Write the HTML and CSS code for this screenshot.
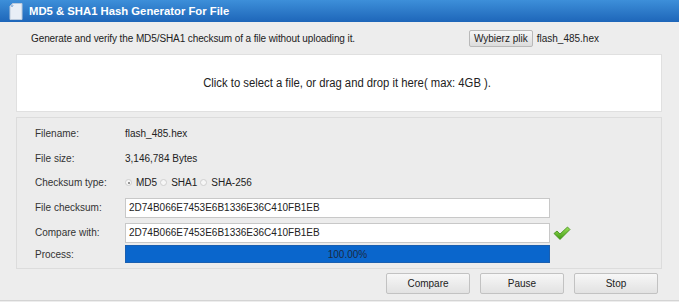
FILE: index.html
```html
<!DOCTYPE html>
<html>
<head>
<meta charset="utf-8">
<link rel="stylesheet" href="styles.css">
</head>
<body>
<div class="titlebar">
  <svg class="ticon" width="14" height="17" viewBox="0 0 14 17">
    <path d="M3.5 0.5 H13 V16.5 H1 V3 Z" fill="#e8eef6" stroke="#b9c9dc" stroke-width="1"/>
    <path d="M1 3 L3.5 0.5 V3 Z" fill="#9fb8d6"/>
    <path d="M2.5 4 L4 2.5" stroke="#4a86c8" stroke-width="1"/>
  </svg>
  <span class="title">MD5 &amp; SHA1 Hash Generator For File</span>
</div>
<div class="main">
  <div class="toprow">
    <span class="desc">Generate and verify the MD5/SHA1 checksum of a file without uploading it.</span>
    <span class="filepick"><span class="fbtn">Wybierz plik</span><span class="fname">flash_485.hex</span></span>
  </div>
  <div class="drop"><span class="droptext">Click to select a file, or drag and drop it here( max: 4GB ).</span></div>
  <div class="panel">
    <div class="row"><span class="lbl">Filename:</span><span class="val">flash_485.hex</span></div>
    <div class="row"><span class="lbl">File size:</span><span class="val">3,146,784 Bytes</span></div>
    <div class="row"><span class="lbl">Checksum type:</span>
      <span class="val radios">
        <span class="radio on"></span><span class="rlbl">MD5</span>
        <span class="radio"></span><span class="rlbl">SHA1</span>
        <span class="radio"></span><span class="rlbl">SHA-256</span>
      </span>
    </div>
    <div class="row"><span class="lbl">File checksum:</span><span class="inp">2D74B066E7453E6B1336E36C410FB1EB</span></div>
    <div class="row"><span class="lbl">Compare with:</span><span class="inp">2D74B066E7453E6B1336E36C410FB1EB</span>
      <svg class="check" width="18" height="15" viewBox="0 0 18 15">
        <defs><linearGradient id="g" x1="0" y1="0" x2="0" y2="1"><stop offset="0" stop-color="#9be05a"/><stop offset="1" stop-color="#3f9a12"/></linearGradient></defs>
        <path d="M1 7.5 L4 5 L7 8 L14.5 1 L17 3.5 L7 13.5 Z" fill="url(#g)" stroke="#3c8a14" stroke-width="0.8" stroke-linejoin="round"/>
      </svg>
    </div>
    <div class="row prow"><span class="lbl">Process:</span><span class="bar">100.00%</span></div>
  </div>
  <div class="buttons">
    <span class="btn">Compare</span>
    <span class="btn">Pause</span>
    <span class="btn">Stop</span>
  </div>
</div>
</body>
</html>
```

FILE: styles.css
```css
html, body {
  margin: 0;
  padding: 0;
}
body {
  width: 679px;
  height: 302px;
  background: #ededed;
  font-family: "Liberation Sans", Arial, sans-serif;
  font-size: 10px;
  color: #333;
  overflow: hidden;
}
.titlebar {
  height: 22px;
  background: linear-gradient(#3d8fd9, #1e66b9);
  display: flex;
  align-items: center;
  padding-left: 9px;
  box-sizing: border-box;
}
.ticon {
  margin-right: 6px;
}
.title {
  color: #fff;
  font-weight: bold;
  font-size: 11.3px;
}
.main {
  padding: 0 17px 0 16px;
  height: 279px;
  border-bottom: 1px solid #d4d4d4;
  box-sizing: border-box;
}
.toprow {
  display: flex;
  justify-content: space-between;
  align-items: center;
  height: 32px;
  padding-left: 15px;
  padding-top: 1px;
  box-sizing: border-box;
}
.desc {
  color: #222;
  letter-spacing: -0.1px;
}
.filepick {
  display: flex;
  align-items: center;
  margin-right: 63px;
}
.fbtn {
  border: 1px solid #b9b9b9;
  border-radius: 2px;
  background: linear-gradient(#f6f6f6, #dcdcdc);
  padding: 2px 4px;
  color: #222;
  margin-right: 4px;
}
.fname {
  color: #222;
}
.drop {
  height: 58px;
  background: #fff;
  border: 1px solid #e0e0e0;
  display: flex;
  align-items: center;
  justify-content: center;
  box-sizing: border-box;
  padding-left: 16px;
}
.droptext {
  font-size: 12px;
  color: #222;
  transform: scaleX(0.94);
  white-space: nowrap;
}
.panel {
  margin-top: 5px;
  height: 152px;
  border: 1px solid #dcdcdc;
  background: #ececec;
  box-sizing: border-box;
  padding: 3px 0 0 18px;
}
.row {
  display: flex;
  align-items: center;
  height: 25px;
}
.row:nth-child(2), .row:nth-child(3) {
  height: 24.5px;
}
.lbl {
  width: 90px;
  flex: none;
}
.val {
  color: #222;
}
.radios {
  display: flex;
  align-items: center;
}
.radio {
  width: 7px;
  height: 7px;
  border: 1px solid #cfcfcf;
  border-radius: 50%;
  background: #f6f6f6;
  margin-right: 4px;
  position: relative;
  box-sizing: border-box;
}
.radio.on::after {
  content: "";
  position: absolute;
  left: 1.5px;
  top: 1.5px;
  width: 2px;
  height: 2px;
  border-radius: 50%;
  background: #777;
}
.rlbl {
  margin-right: 3px;
  color: #222;
}
.inp {
  width: 425px;
  height: 20px;
  background: #fff;
  border: 1px solid #c8c8c8;
  box-sizing: border-box;
  padding-left: 3px;
  display: flex;
  align-items: center;
  color: #222;
}
.check {
  margin-left: 3px;
  margin-top: 2px;
}
.prow {
  height: 18px;
}
.bar {
  width: 425px;
  height: 18px;
  background: #0a66cc;
  border: 1px solid #1a5fb0;
  box-sizing: border-box;
  display: flex;
  align-items: center;
  justify-content: center;
  padding-left: 20px;
  color: #1a2a44;
}
.buttons {
  display: flex;
  justify-content: flex-end;
  gap: 10px;
  padding-top: 4px;
  padding-right: 4px;
}
.btn {
  width: 84px;
  height: 21px;
  border: 1px solid #c2c2c2;
  border-radius: 2px;
  background: linear-gradient(#f7f7f7, #e2e2e2);
  box-sizing: border-box;
  display: flex;
  align-items: center;
  justify-content: center;
  color: #222;
}
```
